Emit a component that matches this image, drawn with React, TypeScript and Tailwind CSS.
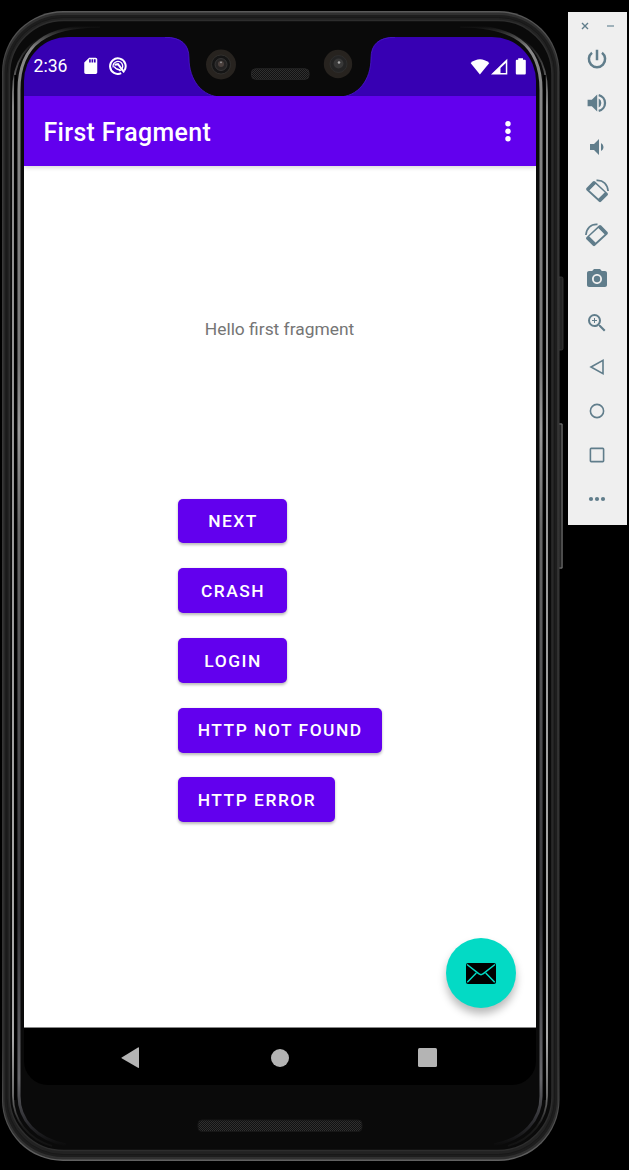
import type { ReactNode } from 'react';
import { MdPhotoCamera, MdSdCard, MdVolumeDown, MdZoomIn } from 'react-icons/md';

function PhoneFrame() {
  return (
    <svg className="absolute inset-0" width="568" height="1170" viewBox="0 0 568 1170" fill="none">
      <defs>
        <linearGradient id="rim" x1="0" y1="11" x2="0" y2="1161" gradientUnits="userSpaceOnUse">
          <stop offset="0" stopColor="#5a5a5a" />
          <stop offset="0.06" stopColor="#3c3c3c" />
          <stop offset="0.9" stopColor="#333" />
          <stop offset="1" stopColor="#606060" />
        </linearGradient>
        <linearGradient id="inner" x1="0" y1="26" x2="0" y2="1146" gradientUnits="userSpaceOnUse">
          <stop offset="0" stopColor="#0a0a0a" />
          <stop offset="0.02" stopColor="#888" />
          <stop offset="0.3" stopColor="#777" />
          <stop offset="0.36" stopColor="#999" />
          <stop offset="0.45" stopColor="#666" />
          <stop offset="0.8" stopColor="#333338" />
          <stop offset="0.94" stopColor="#66666a" />
          <stop offset="0.98" stopColor="#2a2a2e" />
          <stop offset="1" stopColor="#0a0a0a" />
        </linearGradient>
        <linearGradient id="edge" x1="0" y1="40" x2="0" y2="1148" gradientUnits="userSpaceOnUse">
          <stop offset="0" stopColor="#111" />
          <stop offset="0.06" stopColor="#999" />
          <stop offset="0.9" stopColor="#bbb" />
          <stop offset="0.95" stopColor="#777" />
          <stop offset="0.98" stopColor="#1c1c1c" />
          <stop offset="1" stopColor="#111" />
        </linearGradient>
        <pattern id="mesh" width="4" height="4" patternUnits="userSpaceOnUse">
          <rect width="4" height="4" fill="#111" />
          <path d="M0 0h1v1H0zM2 0h1v1H2zM1 1h1v1H1zM3 1h1v1H3zM0 2h1v1H0zM2 2h1v1H2zM1 3h1v1H1zM3 3h1v1H3z" fill="#303030" />
        </pattern>
      </defs>
      <rect x="557" y="277" width="6" height="73" rx="1.5" fill="#222" stroke="#3a3a3a" strokeWidth="0.8" />
      <rect x="557" y="423" width="6" height="146" rx="1.5" fill="#222" />
      <path d="M559 424h3v144h-3" stroke="#777" />
      <rect x="2" y="11" width="557.5" height="1150" rx="61" fill="url(#rim)" />
      <rect x="3" y="12.5" width="555.5" height="1147" rx="60" fill="#303030" />
      <rect x="4.5" y="15" width="552.5" height="1142" rx="58" fill="#1d1d1d" />
      <rect x="7" y="17.5" width="547.5" height="1137" rx="56" fill="#222" stroke="#181818" />
      <rect x="9.5" y="20.5" width="542.5" height="1130" rx="54" fill="#0a0a0a" stroke="#2d2d2d" strokeWidth="1.5" />
      <path d="M55 32C25 42 13 62 13 92V1096C13 1120 28 1139 52 1146" stroke="url(#edge)" strokeWidth="1.8" />
      <path d="M505 32C535 42 547 62 547 92V1096C547 1120 532 1139 508 1146" stroke="url(#edge)" strokeWidth="1.8" />
      <path d="M15.5 75V1100M544.5 75V1100" stroke="#000" strokeWidth="2.5" />
      <path d="M100 26C48 26 19 43 19 90V1096C19 1120 36 1139 66 1145" stroke="url(#inner)" strokeWidth="3" />
      <path d="M460 26C512 26 541 43 541 90V1096C541 1120 524 1139 494 1145" stroke="url(#inner)" strokeWidth="3" />
      <rect x="198" y="1120" width="164" height="11.5" rx="4" fill="url(#mesh)" stroke="#171717" />
    </svg>
  );
}

function Notch() {
  return (
    <svg className="absolute left-[136px] top-0" width="240" height="61" viewBox="160 37 240 61" fill="none">
      <path d="M165 36V37Q189 37 189 58C189 80 202 97 222 97H338C358 97 371 80 371 58Q371 37 395 37V36Z" fill="#0a0a0a" />
      <path d="M165 37.3Q189 37.3 189 58C189 80 202 97 222 97H338C358 97 371 80 371 58Q371 37.3 395 37.3" stroke="#4a18cc" strokeWidth="0.8" />
      <circle cx="221" cy="64.5" r="15" fill="#27231f" />
      <circle cx="221" cy="64.5" r="9.5" fill="#151515" stroke="#353331" strokeWidth="0.8" />
      <circle cx="221" cy="64.5" r="6" fill="#262424" stroke="#3c3c3c" strokeWidth="0.8" />
      <circle cx="221" cy="64" r="3" fill="#4a403d" />
      <circle cx="221" cy="62.3" r="0.9" fill="#999" />
      <circle cx="338" cy="64" r="14.2" fill="#27231f" />
      <circle cx="338.5" cy="64" r="8.5" fill="#242424" stroke="#303030" strokeWidth="0.8" />
      <circle cx="338.5" cy="63.5" r="5" fill="#383838" />
      <circle cx="339" cy="62.5" r="1.3" fill="#aaa" />
      <rect x="251.5" y="68.8" width="57.5" height="10.5" rx="4" fill="url(#mesh)" stroke="#272727" />
    </svg>
  );
}

function StatusBar() {
  return (
    <div className="flex h-[59px] w-full items-center bg-[#3700b3] pl-[9.5px] pr-[10px] text-white">
      <span className="w-[47px] pt-px text-[17.6px] leading-none">2:36</span>
      <MdSdCard className="-mt-px size-[19.5px]" />
      <svg className="-mt-[1.5px] ml-[8.5px]" width="18" height="18" viewBox="0 0 18 18" fill="none" stroke="#fff">
        <path d="M15.2 13.7A7.8 7.8 0 1 0 12.2 16.2" strokeWidth="2" />
        <path d="M12.2 12.8A4.8 4.8 0 1 0 5.2 12.2" strokeWidth="1.4" transform="rotate(25 9 9)" />
        <path d="M5.5 7.8L9 7.2L15.2 15.4" strokeWidth="2" />
        <path d="M5.2 9.5Q7 12.8 11 13" strokeWidth="1.5" />
      </svg>
      <svg className="ml-auto" width="56" height="18" viewBox="0 0 56 18" fill="#fff">
        <path d="M0.6 5Q10-2.5 19.3 5L9.9 16.4Z" />
        <path fillRule="evenodd" d="M21 16.5L37.3 .8V16.5ZM30.5 14.9H35.8V5L30.5 10Z" />
        <path d="M48.2 .2H53V1.7H54.8Q55.8 1.7 55.8 2.7V15.3Q55.8 16.5 54.8 16.5H46.8Q45.8 16.5 45.8 15.3V2.7Q45.8 1.7 46.8 1.7H48.2Z" />
      </svg>
    </div>
  );
}

function AppBar() {
  return (
    <header className="relative z-10 flex h-[70px] items-center justify-between bg-[#6200ee] pl-[19.5px] pr-[25px] text-white shadow-[0_2px_4px_rgba(0,0,0,0.14)]">
      <h1 className="pt-[4px] text-[24.9px] font-medium leading-none tracking-[0.36px]">First Fragment</h1>
      <svg width="6" height="22" viewBox="0 0 6 22" fill="#fff">
        <circle cx="3" cy="3.7" r="2.7" />
        <circle cx="3" cy="11.2" r="2.7" />
        <circle cx="3" cy="18.7" r="2.7" />
      </svg>
    </header>
  );
}

const actions = ['Next', 'Crash', 'Login', 'HTTP not found', 'HTTP error'];

function FirstFragment() {
  return (
    <main className="relative h-[862px] border-b border-[#888] bg-white">
      <p className="pr-px pt-[152px] text-center text-[17.4px] leading-[22px] text-[#757575]">Hello first fragment</p>
      <div className="ml-[153.7px] mt-[158.7px] flex flex-col items-start gap-[24.9px]">
        {actions.map((label) => (
          <button
            key={label}
            className="h-[44.8px] min-w-[109.6px] rounded-[5px] bg-[#6200ee] pl-[20.1px] pr-[18.9px] pt-[2px] text-[17.4px] font-medium uppercase leading-none tracking-[1.5px] text-white shadow-[0_1.5px_3px_rgba(0,0,0,0.28)]"
          >
            {label}
          </button>
        ))}
      </div>
      <button className="absolute bottom-[19px] right-[20.5px] flex size-[69.7px] items-center justify-center rounded-full bg-[#03dac5] shadow-[0_6px_9px_rgba(0,0,0,0.28)]">
        <svg width="30" height="21" viewBox="0 0 30 21" fill="none">
          <rect width="30" height="21" rx="2" fill="#000" />
          <path d="M1 1.5L13 10.8Q15 12.5 17 10.8L29 1.5M1.3 19.3L10.3 10M28.7 19.3L19.7 10" stroke="#03dac5" strokeWidth="1.5" />
        </svg>
      </button>
    </main>
  );
}

function NavigationBar() {
  return (
    <nav className="flex h-[57px] items-center justify-between rounded-b-[24px] bg-black pl-[97px] pr-[99.5px] pt-[2px]">
      <svg width="19" height="22" viewBox="0 0 19 22" fill="#b4b4b4">
        <path d="M.3 10.7L17 .4Q18 0 18 1V20.3Q18 21.2 17 20.7L.6 11.3Z" />
      </svg>
      <span className="ml-[1.5px] size-[18px] rounded-full bg-[#b4b4b4]" />
      <span className="size-[18.7px] rounded-[1.5px] bg-[#b4b4b4]" />
    </nav>
  );
}

function RotateIcon({ right = false }: { right?: boolean }) {
  return (
    <svg className={right ? '-scale-x-100' : ''} width="24" height="24" viewBox="0 0 24 24" fill="none">
      <path
        fill="currentColor"
        fillRule="evenodd"
        d="M7.8 2.6Q9 1.6 10.2 2.6L22.6 14.2Q23.5 15.2 22.6 16.2L16 22.8Q15 23.7 14 22.8L1.5 11.3Q.6 10.2 1.5 9.1ZM10.5 5L4.3 11.2L13.9 20L20.1 13.8Z"
      />
      <path d="M3.5 10.5L9.8 4.2M14 20.5L20.6 13.9" stroke="currentColor" strokeWidth="2" />
      <path d="M11.5 1.4C18.4 .9 22.6 5.5 23.1 12" stroke="currentColor" strokeWidth="1.7" />
    </svg>
  );
}

function Outline({ children }: { children: ReactNode }) {
  return (
    <svg width="24" height="24" viewBox="0 0 24 24" fill="none" stroke="currentColor" strokeWidth="1.6">
      {children}
    </svg>
  );
}

function EmulatorToolbar() {
  const tools: ReactNode[] = [
    <Outline><path d="M7 5.7A8.1 8.1 0 1 0 17 5.7M12 2.7V13.2" strokeWidth="2.5" /></Outline>,
    <Outline>
      <path d="M2.6 8.7H6.8L12.2 3.5V20.5L6.8 15.3H2.6ZM13.7 7.6A5 5 0 0 1 13.7 16.4Z" fill="currentColor" stroke="none" />
      <path d="M13.7 4.1A8.1 8.1 0 0 1 13.7 19.9" strokeWidth="2.3" />
    </Outline>,
    <MdVolumeDown className="size-6" />,
    <RotateIcon />,
    <RotateIcon right />,
    <MdPhotoCamera className="size-6" />,
    <MdZoomIn className="size-6" />,
    <Outline><path d="M6 12L18 5.3V18.7Z" /></Outline>,
    <Outline><circle cx="12" cy="12" r="6.6" /></Outline>,
    <Outline><rect x="5.4" y="5.4" width="13.2" height="13.2" rx="0.8" /></Outline>,
    <Outline>
      <g fill="currentColor" stroke="none">
        <circle cx="6" cy="12" r="2.1" />
        <circle cx="12" cy="12" r="2.1" />
        <circle cx="18" cy="12" r="2.1" />
      </g>
    </Outline>,
  ];
  return (
    <aside className="mt-[12px] h-[513px] w-[59px] bg-[#efefef] text-[#607d8b]">
      <div className="flex h-[25px] items-center justify-between pl-[13px] pr-[13px] pt-[3px]">
        <svg width="8" height="8" viewBox="0 0 8 8" stroke="currentColor" strokeWidth="1.4">
          <path d="M1 1L7 7M7 1L1 7" />
        </svg>
        <span className="h-[2px] w-[7px] bg-[#9fb1ba]" />
      </div>
      {tools.map((tool, index) => (
        <div key={index} className="flex h-[44px] items-center justify-center pr-px">
          {tool}
        </div>
      ))}
    </aside>
  );
}

export default function App() {
  return (
    <div className="flex h-[1170px] w-[629px] overflow-hidden bg-black font-['Roboto',sans-serif]">
      <div className="relative h-[1170px] w-[568px] shrink-0 pl-[24px] pt-[37px]">
        <PhoneFrame />
        <div className="relative h-[1048px] w-[512px] overflow-hidden rounded-t-[44px]">
          <StatusBar />
          <AppBar />
          <FirstFragment />
          <NavigationBar />
          <Notch />
        </div>
      </div>
      <EmulatorToolbar />
    </div>
  );
}
